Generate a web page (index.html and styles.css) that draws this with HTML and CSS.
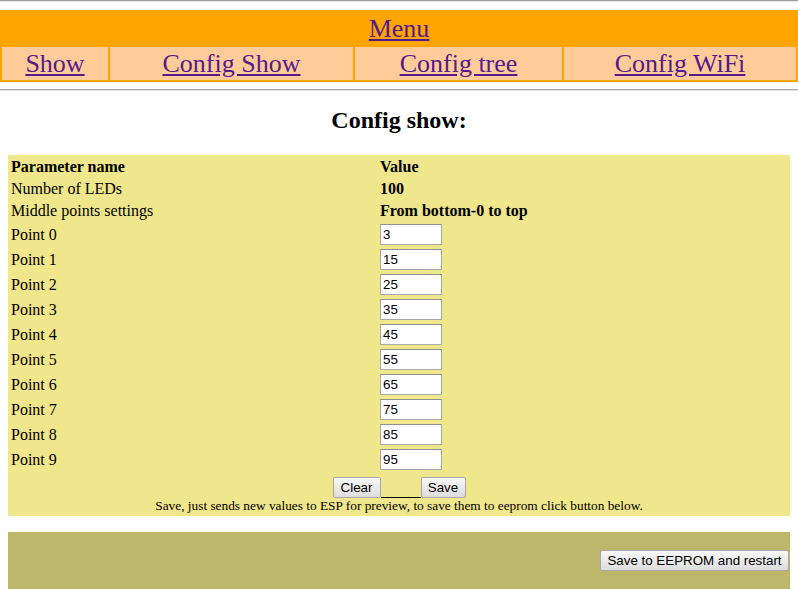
FILE: index.html
```html
<!DOCTYPE html>
<html>
<head>
<meta charset="utf-8">
<link rel="stylesheet" href="styles.css">
</head>
<body>
<hr class="rule top-rule">
<table class="menu">
  <colgroup>
    <col class="m1"><col class="m2"><col class="m3"><col class="m4">
  </colgroup>
  <tr><th colspan="4" class="menu-head"><a href="#">Menu</a></th></tr>
  <tr>
    <td><a href="#">Show</a></td>
    <td><a href="#">Config Show</a></td>
    <td><a href="#">Config tree</a></td>
    <td><a href="#">Config WiFi</a></td>
  </tr>
</table>
<hr class="rule mid-rule">
<h2 class="title">Config show:</h2>
<table class="config">
  <colgroup>
    <col class="c1"><col class="c2">
  </colgroup>
  <tr><th>Parameter name</th><th>Value</th></tr>
  <tr><td>Number of LEDs</td><td class="bold">100</td></tr>
  <tr><td>Middle points settings</td><td class="bold">From bottom-0 to top</td></tr>
  <tr class="inrow"><td>Point 0</td><td><input class="val" type="text" value="3"></td></tr>
  <tr class="inrow"><td>Point 1</td><td><input class="val" type="text" value="15"></td></tr>
  <tr class="inrow"><td>Point 2</td><td><input class="val" type="text" value="25"></td></tr>
  <tr class="inrow"><td>Point 3</td><td><input class="val" type="text" value="35"></td></tr>
  <tr class="inrow"><td>Point 4</td><td><input class="val" type="text" value="45"></td></tr>
  <tr class="inrow"><td>Point 5</td><td><input class="val" type="text" value="55"></td></tr>
  <tr class="inrow"><td>Point 6</td><td><input class="val" type="text" value="65"></td></tr>
  <tr class="inrow"><td>Point 7</td><td><input class="val" type="text" value="75"></td></tr>
  <tr class="inrow"><td>Point 8</td><td><input class="val" type="text" value="85"></td></tr>
  <tr class="inrow"><td>Point 9</td><td><input class="val" type="text" value="95"></td></tr>
  <tr>
    <td colspan="2" class="actions">
      <div class="btnrow"><button class="btn btn-clear">Clear</button><span class="gap"></span><button class="btn btn-save">Save</button></div>
      <div class="note">Save, just sends new values to ESP for preview, to save them to eeprom click button below.</div>
    </td>
  </tr>
</table>
<div class="eeprom">
  <button class="btn btn-eeprom">Save to EEPROM and restart</button>
</div>
</body>
</html>
```
FILE: styles.css
```css
html, body {
  margin: 0;
  padding: 0;
  background: #ffffff;
  font-family: "Liberation Serif", "Times New Roman", serif;
  font-size: 16px;
  color: #000;
}
.rule {
  display: block;
  height: 0;
  border: 0;
  border-top: 1px solid #a0a0a0;
  border-bottom: 1px solid #e6e6e6;
  margin: 0;
}
.top-rule { margin-top: 0; }
.menu {
  width: 798px;
  margin-top: 8px;
  border-spacing: 2px;
  background: #ffa500;
  table-layout: fixed;
}
.menu th, .menu td {
  padding: 1px 0;
  height: 31px;
  line-height: 31px;
  text-align: center;
  font-size: 26px;
  font-weight: normal;
}
.menu td { background: #ffcc99; }
.menu-head { background: #ffa500; }
.menu a {
  color: #551a8b;
  text-decoration: underline;
}
.m1 { width: 106px; }
.m2 { width: 243px; }
.m3 { width: 207px; }
.m4 { width: 232px; }
.mid-rule { margin-top: 7px; }
.title {
  margin: 16px 0 0;
  height: 48px;
  line-height: 27px;
  font-size: 24px;
  font-weight: bold;
  text-align: center;
}
.config {
  margin: 0 8px;
  width: 782px;
  background: #f0e68c;
  border-spacing: 2px;
  table-layout: fixed;
}
.config th, .config td {
  padding: 1px;
  text-align: left;
  line-height: 18px;
  height: 18px;
  vertical-align: middle;
}
.c1 { width: 367px; }
.config .bold { font-weight: bold; }
.config tr.inrow td { height: 23px; box-sizing: border-box; }
.val {
  display: block;
  box-sizing: border-box;
  width: 62px;
  height: 21px;
  margin: 0;
  padding: 1px 2px;
  font-family: "Liberation Sans", Arial, sans-serif;
  font-size: 13.33px;
  color: #000;
  background: #fff;
  border: 1px solid #a9a9a9;
  border-top-color: #8f8f8f;
}
.config td.actions {
  height: auto;
  text-align: center;
  padding: 1px;
}
.btnrow {
  display: flex;
  justify-content: center;
  align-items: flex-end;
  margin-top: 3px;
  height: 21px;
}
.gap {
  display: block;
  width: 40px;
  height: 4px;
  border-bottom: 1px solid #000;
}
.btn {
  box-sizing: border-box;
  height: 21px;
  padding: 0 6px;
  margin: 0;
  font-family: "Liberation Sans", Arial, sans-serif;
  font-size: 13.33px;
  color: #000;
  background: linear-gradient(#f8f8f8, #dddddd);
  border: 1px solid #a8a8a8;
  border-radius: 2px;
}
.btn-clear { width: 48px; }
.btn-save { width: 45px; }
.note {
  font-size: 13.33px;
  line-height: 15px;
  height: 15px;
  text-align: center;
  white-space: nowrap;
}
.eeprom {
  margin: 16px 8px 0;
  height: 39px;
  background: #bdb76b;
  display: flex;
  justify-content: flex-end;
  align-items: flex-start;
  padding: 18px 1px 0 0;
}
.btn-eeprom { width: 189px; height: 21px; }
```
